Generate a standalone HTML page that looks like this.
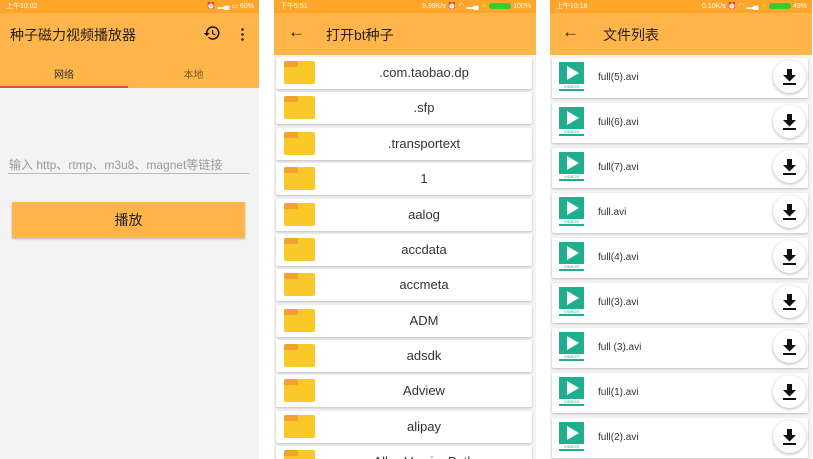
<!DOCTYPE html>
<html><head><meta charset="utf-8"><style>
*{margin:0;padding:0;box-sizing:border-box}
body{width:813px;height:459px;background:#fff;position:relative;overflow:hidden;font-family:"Liberation Sans","Noto Sans CJK SC",sans-serif}
.p{position:absolute;top:0;height:459px;background:#f3f3f3;overflow:hidden}
.sb{position:absolute;left:0;right:0;top:0;height:13px;background:#FFA52A;color:#fff;font-size:7px;line-height:13px;padding:0 6px}
.sb .r{position:absolute;right:5px;top:0}
.tb{position:absolute;left:0;right:0;top:13px;height:42px;background:#FFB54A;color:#222;font-size:14px}
.card{position:absolute;background:#fff;box-shadow:0 1px 2px rgba(0,0,0,.22);border-radius:2px}
.fold{position:absolute;left:8px;top:4px;width:31px;height:23px;background:#F9C92A;border-radius:2px}
.fold:before{content:"";position:absolute;left:0;top:0;width:14px;height:6px;background:#F2A230;border-radius:2px 2px 0 0}
.card .t{position:absolute;left:40px;right:0;text-align:center;top:0;line-height:32px;font-size:13px;color:#333}
.vid{position:absolute;left:7px;top:4px;width:25px;height:30px}
.vid .sq{width:25px;height:22px;background:#1FAF8E;position:relative}
.vid .sq:after{content:"";position:absolute;left:8px;top:4px;border-left:12px solid #fff;border-top:7px solid transparent;border-bottom:7px solid transparent}
.vid .lb{font-size:4px;color:#1FAF8E;text-align:center;line-height:5px}
.vid .bar{height:2px;background:#1FAF8E}
.fn{position:absolute;left:46px;top:0;line-height:40px;font-size:10px;color:#333}
.dl{position:absolute;left:221px;top:2px;width:33px;height:33px;border-radius:50%;background:#fff;box-shadow:0 1px 3px rgba(0,0,0,.3)}
</style></head><body>

<div class="p" style="left:0;width:259px">
 <div class="sb">上午10:02<span class="r">⏰ ▂▄ ▭ 60%</span></div>
 <div class="tb" style="height:75px">
  <div style="position:absolute;left:10px;top:12px;font-size:14px">种子磁力视频播放器</div>
  <svg style="position:absolute;left:203px;top:11px" width="18" height="18" viewBox="0 0 24 24"><path d="M13 3a9 9 0 0 0-9 9H1l4 4 4-4H6a7 7 0 1 1 2.1 5L6.7 18.4A9 9 0 1 0 13 3zm-1 5v5l4.3 2.5.7-1.2-3.5-2.1V8z" fill="#111"/></svg>
  <div style="position:absolute;left:241px;top:14px;width:3px;height:14px;background:radial-gradient(circle,#333 1.2px,transparent 1.5px) 0 0/3px 5px"></div>
  <div style="position:absolute;left:0;width:128px;top:53px;text-align:center;font-size:10px;color:#333">网络</div>
  <div style="position:absolute;left:128px;width:131px;top:53px;text-align:center;font-size:10px;color:#7a5a2a">本地</div>
  <div style="position:absolute;left:0;width:128px;top:73px;height:2px;background:#F2454D"></div>
 </div>
 <div style="position:absolute;left:9px;top:156px;font-size:12px;color:#999">输入 http、rtmp、m3u8、magnet等链接</div>
 <div style="position:absolute;left:8px;top:173px;width:241px;height:1px;background:#bbb"></div>
 <div style="position:absolute;left:12px;top:202px;width:233px;height:36px;background:#FFB54A;box-shadow:0 1px 2px rgba(0,0,0,.25);text-align:center;line-height:36px;font-size:14px;color:#222">播放</div>
</div>

<div class="p" style="left:274px;width:262px">
 <div class="sb">下午5:51<span class="r">9.99K/s ⏰ ◠ ▂▄ ⚡<span style="display:inline-block;width:22px;height:6px;background:#3c3;border-radius:3px;vertical-align:middle"></span> 100%</span></div>
 <div class="tb"><span style="position:absolute;left:14px;top:9px;font-size:17px">←</span><span style="position:absolute;left:52px;top:12px">打开bt种子</span></div>
 <div class="card" style="left:2px;top:57px;width:256px;height:32px"><div class="fold"></div><div class="t">.com.taobao.dp</div></div>
 <div class="card" style="left:2px;top:92px;width:256px;height:32px"><div class="fold"></div><div class="t">.sfp</div></div>
 <div class="card" style="left:2px;top:128px;width:256px;height:32px"><div class="fold"></div><div class="t">.transportext</div></div>
 <div class="card" style="left:2px;top:163px;width:256px;height:32px"><div class="fold"></div><div class="t">1</div></div>
 <div class="card" style="left:2px;top:199px;width:256px;height:32px"><div class="fold"></div><div class="t">aalog</div></div>
 <div class="card" style="left:2px;top:234px;width:256px;height:32px"><div class="fold"></div><div class="t">accdata</div></div>
 <div class="card" style="left:2px;top:269px;width:256px;height:32px"><div class="fold"></div><div class="t">accmeta</div></div>
 <div class="card" style="left:2px;top:305px;width:256px;height:32px"><div class="fold"></div><div class="t">ADM</div></div>
 <div class="card" style="left:2px;top:340px;width:256px;height:32px"><div class="fold"></div><div class="t">adsdk</div></div>
 <div class="card" style="left:2px;top:375px;width:256px;height:32px"><div class="fold"></div><div class="t">Adview</div></div>
 <div class="card" style="left:2px;top:411px;width:256px;height:32px"><div class="fold"></div><div class="t">alipay</div></div>
 <div class="card" style="left:2px;top:446px;width:256px;height:32px"><div class="fold"></div><div class="t">AllowVersionPath</div></div>
</div>

<div class="p" style="left:550px;width:262px">
 <div class="sb">上午10:16<span class="r">0.10K/s ⏰ ◠ ▂▄ ⚡<span style="display:inline-block;width:22px;height:6px;background:#3c3;border-radius:3px;vertical-align:middle"></span> 49%</span></div>
 <div class="tb"><span style="position:absolute;left:12px;top:9px;font-size:17px">←</span><span style="position:absolute;left:53px;top:12px">文件列表</span></div>
 <div id="list"></div>
</div>
<script>
var n=["full(5).avi","full(6).avi","full(7).avi","full.avi","full(4).avi","full(3).avi","full (3).avi","full(1).avi","full(2).avi"],h="";
n.forEach(function(s,i){h+='<div class="card" style="left:2px;top:'+(58+i*45)+'px;width:256px;height:40px"><div class="vid"><div class="sq"></div><div class="lb">VIDEOS</div><div class="bar"></div></div><div class="fn">'+s+'</div><div class="dl"><svg width="33" height="33" viewBox="0 0 33 33"><path d="M14 9h5v6h4l-6.5 6.5L10 15h4z M10 23h13v2H10z" fill="#111"/></svg></div></div>';});
document.getElementById("list").innerHTML=h;
</script>
</body></html>
